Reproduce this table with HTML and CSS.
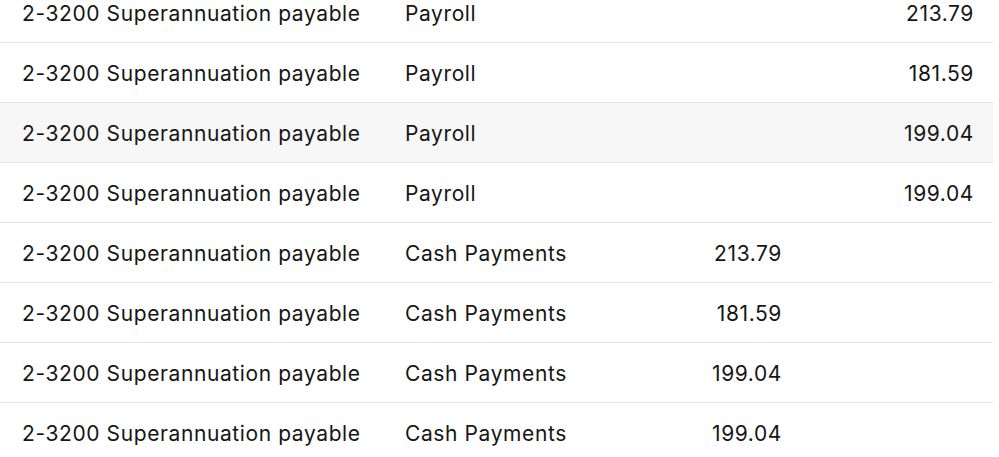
FILE: index.html
```html
<!DOCTYPE html>
<html>
<head>
<meta charset="utf-8">
<link rel="stylesheet" href="styles.css">
</head>
<body>
<div class="table">
  <div class="row"><div class="cell acct">2-3200 Superannuation payable</div><div class="cell src">Payroll</div><div class="cell num"></div><div class="cell num credit">213.79</div></div>
  <div class="row"><div class="cell acct">2-3200 Superannuation payable</div><div class="cell src">Payroll</div><div class="cell num"></div><div class="cell num credit">181.59</div></div>
  <div class="row hover"><div class="cell acct">2-3200 Superannuation payable</div><div class="cell src">Payroll</div><div class="cell num"></div><div class="cell num credit">199.04</div></div>
  <div class="row"><div class="cell acct">2-3200 Superannuation payable</div><div class="cell src">Payroll</div><div class="cell num"></div><div class="cell num credit">199.04</div></div>
  <div class="row"><div class="cell acct">2-3200 Superannuation payable</div><div class="cell src">Cash Payments</div><div class="cell num">213.79</div><div class="cell num credit"></div></div>
  <div class="row"><div class="cell acct">2-3200 Superannuation payable</div><div class="cell src">Cash Payments</div><div class="cell num">181.59</div><div class="cell num credit"></div></div>
  <div class="row"><div class="cell acct">2-3200 Superannuation payable</div><div class="cell src">Cash Payments</div><div class="cell num">199.04</div><div class="cell num credit"></div></div>
  <div class="row"><div class="cell acct">2-3200 Superannuation payable</div><div class="cell src">Cash Payments</div><div class="cell num">199.04</div><div class="cell num credit"></div></div>
</div>
</body>
</html>
```
FILE: styles.css
```css
html, body {
  margin: 0;
  padding: 0;
  background: #ffffff;
}
body {
  font-family: "Inter", sans-serif;
  font-size: 21px;
  letter-spacing: 0.6px;
  color: #161616;
  overflow: hidden;
}
.table {
  width: 993px;
  margin-top: -17px;
}
.row {
  display: grid;
  grid-template-columns: 383px 218px 200px 192px;
  height: 59px;
  align-items: center;
  border-bottom: 1px solid #e3e3e3;
}
.row.hover {
  background: #f7f7f7;
}
.cell {
  padding-left: 22px;
  padding-top: 2px;
  white-space: nowrap;
}
.num {
  text-align: right;
  padding-left: 0;
  padding-right: 19px;
}
```
